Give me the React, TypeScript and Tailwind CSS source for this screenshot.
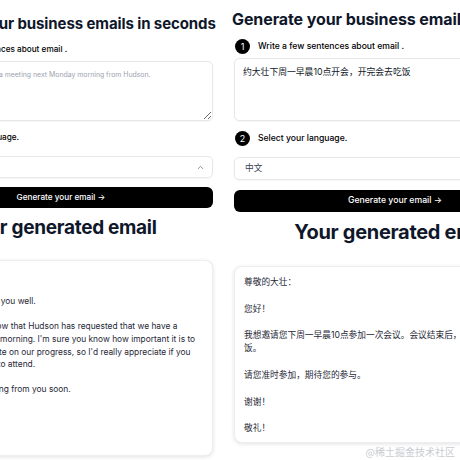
import React from "react";
import { ChevronUp } from "lucide-react";

const FONT = "font-['Inter','Noto_Sans_CJK_SC',sans-serif]";

const leftEmail =
  "Dear Sir,\n\nI hope this email finds you well.\n\nI wanted to let you know that Hudson has requested that we have a\nmeeting next Monday morning. I'm sure you know how important it is to\nkeep Hudson up to date on our progress, so I'd really appreciate if you\ncould also make time to attend.\n\nI look forward to hearing from you soon.\n\nBest regards,\n[Your Name]";

const rightEmail =
  "尊敬的大壮：\n\n您好！\n\n我想邀请您下周一早晨10点参加一次会议。会议结束后，我们一起去吃\n饭。\n\n请您准时参加，期待您的参与。\n\n谢谢！\n\n敬礼！";

export default function App() {
  return (
    <div className={`relative flex w-[460px] h-[460px] overflow-hidden bg-white text-[#111827] ${FONT}`}>
      {/* Left screenshot */}
      <div className="flex flex-col w-[304px] ml-[-91px] shrink-0">
        <h1 className="mt-[15px] ml-[2px] whitespace-nowrap text-[15px] leading-[18px] font-bold text-[#0f172a] tracking-[-0.1px]">
          Generate your business emails in seconds
        </h1>
        <div className="mt-[9px] h-[14px] flex items-center gap-[8px]">
          <span className="w-[14px] h-[14px] rounded-full bg-black text-white text-[8px] flex items-center justify-center">1</span>
          <span className="-ml-[3px] text-[8.2px] font-medium text-black">Write a few sentences about email .</span>
        </div>
        <textarea
          className="mt-[5px] h-[60px] w-full rounded-[5px] border border-[#e5e7eb] pl-0 pr-[8px] py-[7px] text-[6.9px] leading-[11px] text-[#111827] placeholder:text-[#9ca3af] outline-none shadow-[0_1px_2px_rgba(0,0,0,0.04)]"
          placeholder="e.g. Write a line requesting a meeting next Monday morning from Hudson."
        />
        <div className="mt-[9px] h-[14px] flex items-center gap-[8px]">
          <span className="w-[14px] h-[14px] rounded-full bg-black text-white text-[8px] flex items-center justify-center">2</span>
          <span className="ml-[3px] text-[8.2px] font-medium text-black">Select your language.</span>
        </div>
        <div className="mt-[12px] h-[22px] rounded-[5px] border border-[#e5e7eb] flex items-center justify-between pl-[8px] pr-[7px] shadow-[0_1px_2px_rgba(0,0,0,0.04)]">
          <span className="text-[8.2px] text-[#111827]">English</span>
          <ChevronUp className="w-[9px] h-[9px] text-[#6b7280]" strokeWidth={2} />
        </div>
        <button className="mt-[9px] h-[21px] rounded-[6px] bg-black text-white text-[8.2px] font-medium flex items-center justify-center">
          Generate your email →
        </button>
        <h2 className="mt-[8px] text-center text-[19px] leading-[24px] font-bold text-[#0f172a] tracking-[-0.3px] whitespace-nowrap">
          Your generated email
        </h2>
        <div className="mt-[20px] ml-[-10px] w-[314px] h-[196px] rounded-[8px] border border-[#eceef1] bg-white shadow-[0_1px_4px_rgba(0,0,0,0.12)] pl-[12px] pt-[9px] overflow-hidden">
          <p className="whitespace-pre text-[8.4px] leading-[12.6px] text-[#1f2937]">{leftEmail}</p>
        </div>
      </div>

      {/* Right screenshot */}
      <div className="flex flex-col w-[322px] ml-[21px] shrink-0">
        <h1 className="mt-[9px] -ml-[2px] whitespace-nowrap text-[16px] leading-[20px] font-bold text-[#0f172a] tracking-[-0.1px]">
          Generate your business emails in seconds
        </h1>
        <div className="mt-[10px] h-[15px] flex items-center gap-[8px] ml-[1px]">
          <span className="w-[15px] h-[15px] rounded-full bg-black text-white text-[9px] flex items-center justify-center">1</span>
          <span className="text-[8.6px] font-medium text-black">Write a few sentences about email .</span>
        </div>
        <textarea
          className="mt-[4px] h-[63px] w-full rounded-[5px] border border-[#e5e7eb] px-[8px] py-[7px] text-[8.8px] leading-[12px] text-[#111827] outline-none shadow-[0_1px_2px_rgba(0,0,0,0.04)]"
          defaultValue="约大壮下周一早晨10点开会，开完会去吃饭"
        />
        <div className="mt-[10px] h-[15px] flex items-center gap-[8px] ml-[1px]">
          <span className="w-[15px] h-[15px] rounded-full bg-black text-white text-[9px] flex items-center justify-center">2</span>
          <span className="text-[8.6px] font-medium text-black">Select your language.</span>
        </div>
        <div className="mt-[11px] h-[23px] rounded-[5px] border border-[#e5e7eb] flex items-center justify-between px-[10px] shadow-[0_1px_2px_rgba(0,0,0,0.04)]">
          <span className="text-[8.7px] text-[#374151]">中文</span>
          <ChevronUp className="w-[9px] h-[9px] text-[#6b7280]" strokeWidth={2} />
        </div>
        <button className="mt-[10px] h-[22px] rounded-[6px] bg-black text-white text-[8.7px] font-medium flex items-center justify-center">
          Generate your email →
        </button>
        <h2 className="mt-[7px] text-center text-[20px] leading-[26px] font-bold text-[#0f172a] tracking-[-0.3px] whitespace-nowrap">
          Your generated email
        </h2>
        <div className="mt-[21px] h-[177px] rounded-[8px] border border-[#eceef1] bg-white shadow-[0_1px_4px_rgba(0,0,0,0.12)] pl-[9px] pt-[9px]">
          <p className="whitespace-pre text-[8.7px] leading-[13.3px] text-[#1f2937]">{rightEmail}</p>
        </div>
      </div>

      <div className="absolute right-[5px] bottom-[2px] text-[10px] leading-[12px] text-[#c9ccd1] font-['Noto_Sans_CJK_SC',sans-serif]">
        @稀土掘金技术社区
      </div>
    </div>
  );
}
